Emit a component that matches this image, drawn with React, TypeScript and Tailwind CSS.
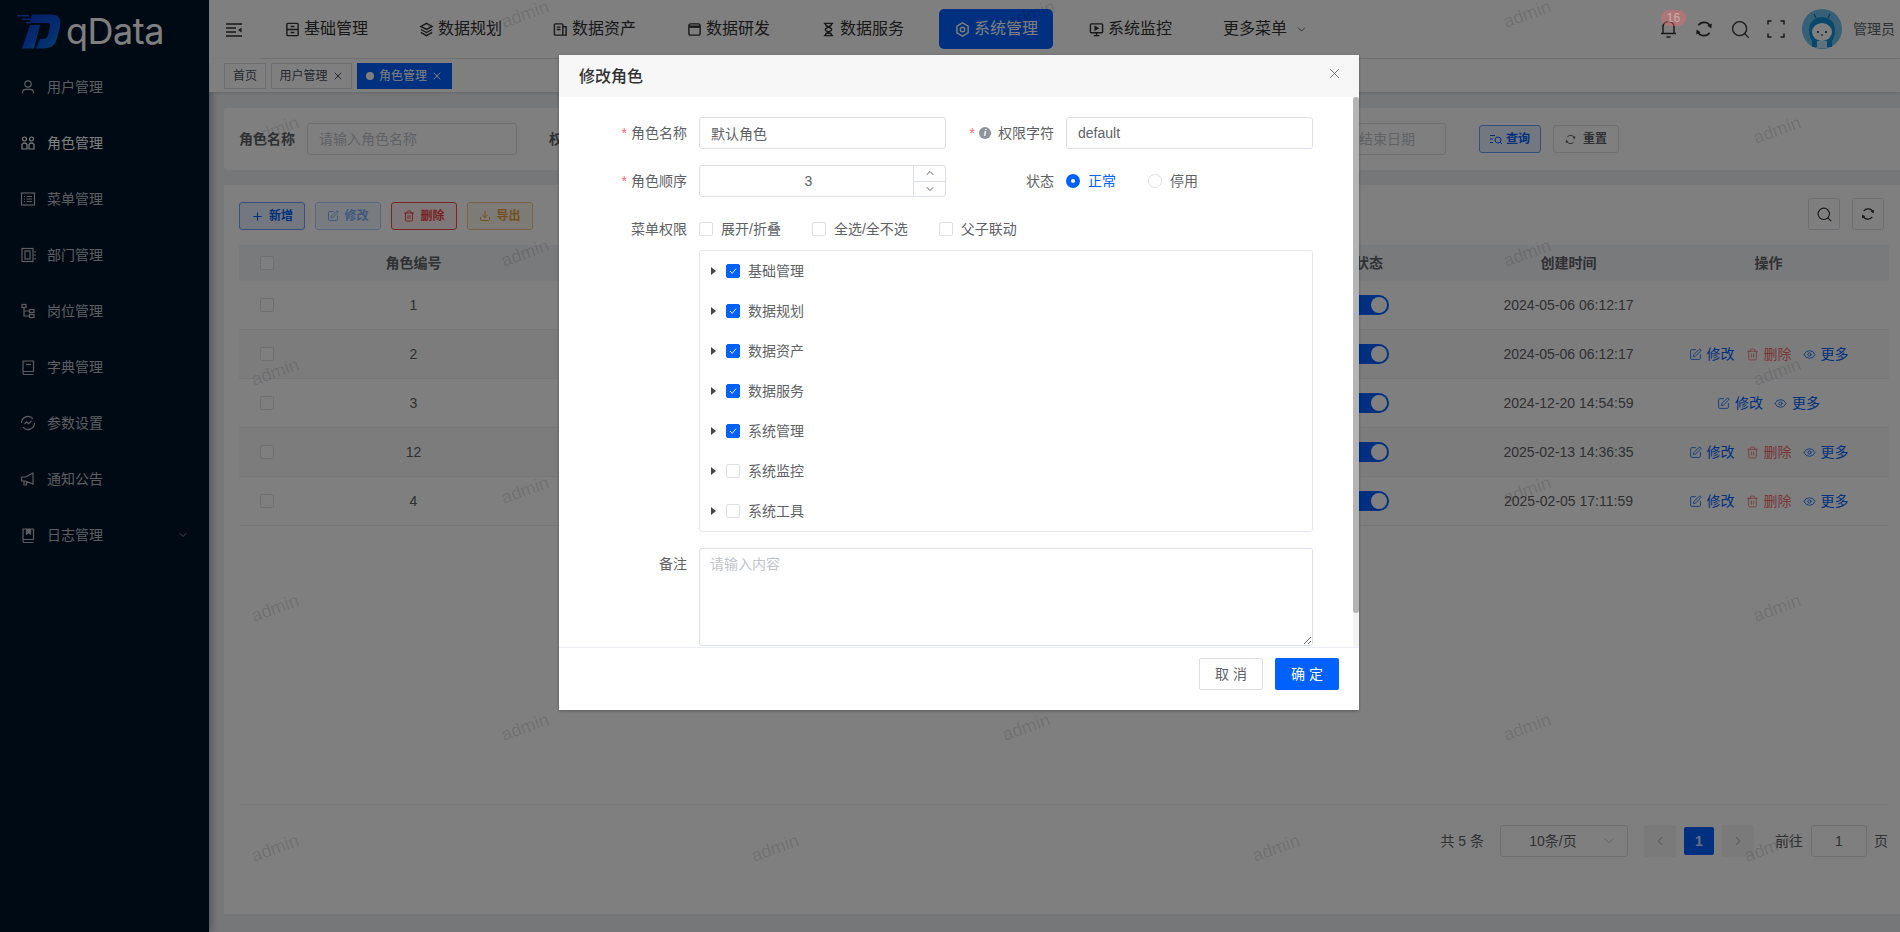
import { ChevronDown, ChevronLeft, ChevronRight, ChevronUp, Download, Eye, Plus, Search, SquarePen, Trash2, X } from 'lucide-react';
import type { FC, ReactNode } from 'react';

const FONT = 'font-["Liberation_Sans","Noto_Sans_CJK_SC",sans-serif]';
const GRID = 'grid-cols-[56px_237px_717px_240px_159px_1fr]';

const Stroke: FC<{ size?: number; className?: string; children: ReactNode }> = ({ size = 16, className, children }) => (
  <svg width={size} height={size} viewBox="0 0 16 16" fill="none" stroke="currentColor" strokeWidth="1.2" className={className}>
    {children}
  </svg>
);

const Refresh: FC<{ size: number; className?: string }> = ({ size, className }) => (
  <svg width={size} height={size} viewBox="0 0 18 18" fill="none" stroke="currentColor" strokeWidth="1.6" className={className}>
    <path d="M3.4 5.2A7 7 0 0 1 15.4 6.4M14.6 12.8A7 7 0 0 1 2.6 11.6" />
    <path d="M16.8 3.4l-.4 5-4-2.6zM1.2 14.6l.4-5 4 2.6z" fill="currentColor" stroke="none" />
  </svg>
);

const sideItems: { label: string; icon: ReactNode; active?: boolean; more?: boolean }[] = [
  { label: '用户管理', icon: <Stroke><circle cx="8" cy="5" r="3.2" /><path d="M2.5 14.5v-1c0-2 1.6-3.2 3.2-3.2h4.6c1.6 0 3.2 1.2 3.2 3.2v1" /></Stroke> },
  { label: '角色管理', active: true, icon: <Stroke><circle cx="4.5" cy="4" r="2" /><circle cx="11.5" cy="4" r="2" /><path d="M2 14V9.5l1.2-1.3h2.6L7 9.5V14zM9 14V9.5l1.2-1.3h2.6L14 9.5V14z" /></Stroke> },
  { label: '菜单管理', icon: <Stroke><rect x="1.5" y="2" width="13" height="12" /><path d="M4 5.5h1M4 8h1M4 10.5h1M6.5 5.5H12M6.5 8H12M6.5 10.5H12" /></Stroke> },
  { label: '部门管理', icon: <Stroke><rect x="2" y="1.5" width="11" height="13" /><rect x="5" y="4" width="5" height="8" /><path d="M15 4v1.5M15 7.5V9M15 11v1.5" /></Stroke> },
  { label: '岗位管理', icon: <Stroke><rect x="2" y="1.5" width="4" height="3" /><rect x="9.5" y="6.5" width="4.5" height="3" /><rect x="9.5" y="11.5" width="4.5" height="3" /><path d="M4 4.5V13h5.5M4 8h5.5" /></Stroke> },
  { label: '字典管理', icon: <Stroke><path d="M3 12.5V2h10.5v10.5H4.5a1.5 1.5 0 0 0 0 3h9" /><path d="M6 5.5h5" /></Stroke> },
  { label: '参数设置', icon: <Stroke><path d="M14.5 8A6.5 6.5 0 0 1 3 12.2M1.5 8A6.5 6.5 0 0 1 13 3.8" /><path d="M4.5 9l2-2.2 2 1.8 3-2.6" /></Stroke> },
  { label: '通知公告', icon: <Stroke><path d="M1.5 6h4L13 2v11L5.5 10h-4zM4 10v4h2.5v-3.4" /></Stroke> },
  { label: '日志管理', more: true, icon: <Stroke><path d="M3 12.5V2h10.5v10.5H4.5a1.5 1.5 0 0 0 0 3h9" /><path d="M6.5 2v5l2-1.4L10.5 7V2" fill="currentColor" /></Stroke> },
];

const navItems: { label: string; icon: ReactNode; active?: boolean }[] = [
  { label: '基础管理', icon: <Stroke size={15} className="stroke-[1.5]"><rect x="2" y="1.5" width="12" height="13" rx="1" /><path d="M2 8h12M6 4.8h4M6 11.2h4" /></Stroke> },
  { label: '数据规划', icon: <Stroke size={15} className="stroke-[1.5]"><path d="M8 1.5l6 3.2-6 3.2-6-3.2zM2 8l6 3.2L14 8M2 11l6 3.5 6-3.5" /></Stroke> },
  { label: '数据资产', icon: <Stroke size={15} className="stroke-[1.5]"><rect x="1.5" y="2" width="9" height="12" rx="1" /><path d="M4 5.5h4M4 8h4M10.5 5H14v9h-3.5" /></Stroke> },
  { label: '数据研发', icon: <Stroke size={15} className="stroke-[1.5]"><rect x="2" y="2" width="12" height="12" rx="2" /><path d="M2 5h12" strokeWidth="2.6" /></Stroke> },
  { label: '数据服务', icon: <Stroke size={15} className="stroke-[1.5]"><path d="M3 1.5h10M3 14.5h10M4.5 1.5c0 4 7 4 7 6.5s-7 2.5-7 6.5M11.5 1.5c0 4-7 4-7 6.5s7 2.5 7 6.5" /></Stroke> },
  { label: '系统管理', active: true, icon: <Stroke size={15} className="stroke-[1.5]"><path d="M8 1l6 3.5v7L8 15l-6-3.5v-7z" /><circle cx="8" cy="8" r="2.4" /></Stroke> },
  { label: '系统监控', icon: <Stroke size={15} className="stroke-[1.5]"><rect x="1.5" y="2" width="13" height="9.5" rx="1" /><path d="M8 11.5v3M5 14.5h6" /><path d="M6.5 5l3 1.7-3 1.7z" fill="currentColor" /></Stroke> },
];

const rows = [
  { id: '1', time: '2024-05-06 06:12:17', edit: false, del: false, more: false },
  { id: '2', time: '2024-05-06 06:12:17', edit: true, del: true, more: true },
  { id: '3', time: '2024-12-20 14:54:59', edit: true, del: false, more: true },
  { id: '12', time: '2025-02-13 14:36:35', edit: true, del: true, more: true },
  { id: '4', time: '2025-02-05 17:11:59', edit: true, del: true, more: true },
];

const watermarks = [
  [525, 14], [1031, 14], [1527, 14],
  [275, 130], [775, 130], [1276, 130], [1777, 130],
  [525, 253], [1031, 253], [1527, 253],
  [275, 372], [775, 372], [1276, 372], [1777, 372],
  [525, 490], [1031, 490], [1527, 490],
  [275, 608], [775, 608], [1276, 608], [1777, 608],
  [525, 727], [1026, 727], [1527, 727],
  [275, 848], [775, 848], [1276, 848], [1768, 848],
];

const treeItems = [
  { label: '基础管理', on: true },
  { label: '数据规划', on: true },
  { label: '数据资产', on: true },
  { label: '数据服务', on: true },
  { label: '系统管理', on: true },
  { label: '系统监控', on: false },
  { label: '系统工具', on: false },
];

const Logo: FC = () => (
  <svg width="46" height="35" viewBox="0 0 46 35" className="shrink-0">
    <defs>
      <linearGradient id="logoD" x1="0" y1="0" x2="1" y2="1">
        <stop offset="0" stopColor="#0a3fd0" />
        <stop offset="0.6" stopColor="#0a55e0" />
        <stop offset="1" stopColor="#0c8fe0" />
      </linearGradient>
    </defs>
    <path d="M1 1h12v1.5H1zM6 4.5h9V6H6zM10 8h5v1.5h-5z" fill="#0a4fe0" />
    <path d="M16 .5h19Q46 .5 44 12l-3 12Q39 34.5 27 34.5h-7L24 25h3q4 0 5-4l2-8q1-4-3-4H14z" fill="url(#logoD)" />
    <path d="M14 11h10l-6 23.5H6z" fill="url(#logoD)" />
  </svg>
);

const Avatar: FC = () => (
  <svg width="40" height="40" viewBox="0 0 40 40" className="shrink-0">
    <circle cx="20" cy="20" r="20" fill="#6ec0ee" />
    <path d="M10 38v-6c-2-3-3-7-3-11 0-8 6-13 13-13s13 5 13 13c0 4-1 8-3 11v6z" fill="#1090d8" />
    <path d="M14 9l-2-4M26 9l2-4" stroke="#0c6ea8" strokeWidth="1.2" />
    <ellipse cx="20" cy="23" rx="10" ry="9" fill="#fff" />
    <circle cx="16" cy="23" r="1" fill="#222" />
    <circle cx="24" cy="23" r="1" fill="#222" />
    <path d="M19 26h2" stroke="#222" />
    <rect x="15" y="32" width="10" height="7" fill="#bfe3f5" />
  </svg>
);

const Box: FC<{ on?: boolean }> = ({ on }) => (
  <span className={`flex h-[14px] w-[14px] shrink-0 items-center justify-center rounded-[2px] border ${on ? 'border-[#0061ff] bg-[#0061ff]' : 'border-[#dcdfe6] bg-white'}`}>
    {on && (
      <svg width="10" height="10" viewBox="0 0 10 10" fill="none" stroke="#fff" strokeWidth="0.9">
        <path d="M2 5l2.2 2.4L8 2.6" />
      </svg>
    )}
  </span>
);

const Label: FC<{ required?: boolean; children: ReactNode; className?: string }> = ({ required, children, className }) => (
  <div className={`flex shrink-0 items-center justify-end text-sm text-[#606266] ${className ?? ''}`}>
    {required && <span className="mr-1 text-[#f56c6c]">*</span>}
    {children}
  </div>
);

const ToolButton: FC<{ icon: ReactNode; label: string; className: string }> = ({ icon, label, className }) => (
  <button className={`flex h-7 w-[66px] items-center justify-center gap-[5px] rounded-[3px] border text-xs font-bold ${className}`}>
    {icon}
    {label}
  </button>
);

export default function App() {
  return (
    <div className={`relative flex h-[932px] w-[1900px] overflow-hidden bg-[#edeff3] ${FONT}`}>
      <aside className="flex h-full w-[209px] shrink-0 flex-col bg-[#001529] shadow-[2px_0_8px_rgba(0,21,41,0.35)]">
        <div className="flex h-[59px] items-start pl-4 pt-[14px]">
          <Logo />
          <span className="mt-[-1px] ml-1 font-['Inter'] text-[36px] leading-9 tracking-[-0.5px] text-white">qData</span>
        </div>
        <nav className="flex flex-col">
          {sideItems.map((item) => (
            <div key={item.label} className={`flex h-14 items-center pr-5 pl-5 text-sm ${item.active ? 'text-white' : 'text-[#b9bcc2]'}`}>
              {item.icon}
              <span className="ml-[11px]">{item.label}</span>
              {item.more && <ChevronDown size={12} strokeWidth={1.5} className="ml-auto" />}
            </div>
          ))}
        </nav>
      </aside>

      <main className="flex min-w-0 flex-1 flex-col">
        <header className="flex h-[59px] shrink-0 bg-white">
          <div className="flex w-[50px] shrink-0 items-center pl-[17px]">
            <svg width="16" height="14" viewBox="0 0 16 14" fill="none" stroke="#303133" strokeWidth="1.4">
              <path d="M0 1h16M0 5h10M0 9h10M0 13h16" />
              <path d="M15.5 4.5v5L12 7z" fill="#303133" stroke="none" />
            </svg>
          </div>
          <div className="flex flex-1 items-center border-b border-[#e6e6e6] pl-[10px] text-[#303133]">
            <div className="flex items-center gap-5">
              {navItems.map((item) => (
                <div key={item.label} className={`flex h-10 w-[114px] items-center gap-1 rounded-[5px] pl-4 text-base ${item.active ? 'bg-[#0061ff] text-white' : ''}`}>
                  {item.icon}
                  {item.label}
                </div>
              ))}
              <div className="flex h-10 items-center gap-2 pl-4 text-base">
                更多菜单
                <ChevronDown size={13} strokeWidth={1.4} />
              </div>
            </div>
            <div className="ml-auto flex items-center">
              <div className="relative flex h-9 w-9 items-center justify-center">
                <svg width="17" height="18" viewBox="0 0 17 18" fill="none" stroke="#303133" strokeWidth="1.4">
                  <path d="M1 13.5h15M3 13.5V7a5.5 5.5 0 0 1 11 0v6.5M6.5 17h4" />
                </svg>
                <span className="absolute top-[-1px] left-[11px] z-10 flex h-4 w-[25px] items-center justify-center rounded-full bg-[#f56c6c]/40 text-xs text-white/40">16</span>
              </div>
              <span className="flex h-9 w-9 items-center justify-center text-[#303133]"><Refresh size={18} /></span>
              <span className="flex h-9 w-9 items-center justify-center text-[#303133]"><Search size={21} strokeWidth={1.5} /></span>
              <span className="mr-2 flex h-9 w-9 items-center justify-center">
                <svg width="18" height="18" viewBox="0 0 18 18" fill="none" stroke="#303133" strokeWidth="1.5">
                  <path d="M1 4.5V1h3.5M13.5 1H17v3.5M17 13.5V17h-3.5M4.5 17H1v-3.5" />
                </svg>
              </span>
              <Avatar />
              <span className="mr-[5px] ml-[11px] text-sm text-[#606266]">管理员</span>
            </div>
          </div>
        </header>

        <div className="flex h-[33px] shrink-0 items-center gap-[5px] bg-white pl-[15px] text-xs text-[#495060] shadow-[0_1px_3px_rgba(0,0,0,0.14)]">
          <span className="flex h-[26px] w-[42px] items-center justify-center border border-[#d8dce5]">首页</span>
          <span className="flex h-[26px] w-[81px] items-center justify-center gap-1 border border-[#d8dce5]">
            用户管理
            <X size={12} />
          </span>
          <span className="flex h-[26px] w-[95px] items-center justify-center gap-1 bg-[#0061ff] text-white">
            <span className="mr-[1px] h-2 w-2 rounded-full bg-white" />
            角色管理
            <X size={12} />
          </span>
        </div>

        <div className="flex min-h-0 flex-1 flex-col gap-[15px] pt-4 pb-[18px] pl-[15px]">
          <section className="flex h-[62px] shrink-0 items-center rounded-l-[3px] bg-white pl-[15px] text-sm">
            <span className="w-[68px] shrink-0 font-bold text-[#606266]">角色名称</span>
            <span className="flex h-8 w-[210px] shrink-0 items-center rounded-[3px] border border-[#dcdfe6] pl-[11px] text-[#c0c4cc]">请输入角色名称</span>
            <span className="ml-8 w-[697px] shrink-0 font-bold text-[#606266]">权限字符</span>
            <span className="flex h-8 w-[200px] shrink-0 items-center justify-end rounded-[3px] border border-[#dcdfe6] pr-[30px] text-[#c0c4cc]">结束日期</span>
            <button className="ml-[33px] flex h-7 w-[62px] items-center justify-center gap-[3px] rounded-[3px] border border-[#6c9cff] bg-[#e6efff] text-xs font-bold text-[#0061ff]">
              <svg width="13" height="13" viewBox="0 0 13 13" fill="none" stroke="currentColor">
                <path d="M0 2.5h5M0 6h3M0 9.5h3" />
                <circle cx="8" cy="7" r="3" />
                <path d="M10.2 9.2L12 11" />
              </svg>
              查询
            </button>
            <button className="ml-3 flex h-7 w-[66px] items-center justify-center gap-[7px] rounded-[3px] border border-[#dcdfe6] text-xs font-bold text-[#606266]">
              <Refresh size={11} />
              重置
            </button>
          </section>

          <section className="flex min-h-0 flex-1 flex-col bg-white pt-[13px] pr-[11px] pb-[57px] pl-[15px]">
            <div className="flex h-8 shrink-0 items-end justify-between pr-[5px]">
              <div className="flex gap-[10px]">
                <ToolButton icon={<Plus size={13} />} label="新增" className="border-[#6c9cff] bg-[#e6efff] text-[#0061ff]" />
                <ToolButton icon={<SquarePen size={12} />} label="修改" className="border-[#b3d0ff] bg-[#f0f6ff] text-[#80b0ff]" />
                <ToolButton icon={<Trash2 size={12} />} label="删除" className="border-[#f04848] bg-[#fef0f0] text-[#f04848]" />
                <ToolButton icon={<Download size={12} />} label="导出" className="border-[#f5c98a] bg-[#fdf6ec] text-[#e6a23c]" />
              </div>
              <div className="flex gap-3 text-[#303133]">
                <span className="flex h-8 w-8 items-center justify-center rounded-[3px] border border-[#dcdfe6]"><Search size={17} strokeWidth={1.6} /></span>
                <span className="flex h-8 w-8 items-center justify-center rounded-[3px] border border-[#dcdfe6]"><Refresh size={14} /></span>
              </div>
            </div>

            <div className={`mt-[15px] grid h-9 shrink-0 ${GRID} items-center bg-[#f3f4f8] text-center text-sm font-bold text-[#606266]`}>
              <span className="flex justify-center"><Box /></span>
              <span>角色编号</span>
              <span />
              <span>状态</span>
              <span>创建时间</span>
              <span>操作</span>
            </div>
            {rows.map((row, i) => (
              <div key={row.id} className={`grid h-[49px] shrink-0 ${GRID} items-center border-b border-[#ebeef5] text-center text-sm text-[#606266] ${i % 2 === 1 ? 'bg-[#f9f9fb]' : ''}`}>
                <span className="flex justify-center"><Box /></span>
                <span>{row.id}</span>
                <span />
                <span className="flex justify-center">
                  <span className="flex h-5 w-10 items-center justify-end rounded-full bg-[#0061ff] pr-[2px]">
                    <span className="h-4 w-4 rounded-full bg-white" />
                  </span>
                </span>
                <span>{row.time}</span>
                <span className="flex items-center justify-center gap-[11px] text-[#0061ff]">
                  {row.edit && <span className="flex items-center gap-[5px]"><SquarePen size={13} strokeWidth={1.5} />修改</span>}
                  {row.del && <span className="flex items-center gap-[5px] text-[#f56c6c]"><Trash2 size={13} strokeWidth={1.5} />删除</span>}
                  {row.more && <span className="flex items-center gap-[5px]"><Eye size={13} strokeWidth={1.5} />更多</span>}
                </span>
              </div>
            ))}

            <div className="mt-auto flex h-[53px] shrink-0 items-end justify-end border-t border-[#ebeef5] text-sm text-[#606266]">
              <span className="mr-4 flex h-8 items-center whitespace-nowrap">共 5 条</span>
              <span className="relative flex h-8 w-32 items-center justify-center rounded-[3px] border border-[#dcdfe6] pr-[22px]">
                10条/页
                <ChevronDown size={16} strokeWidth={1.3} className="absolute right-[10px] text-[#c0c4cc]" />
              </span>
              <span className="ml-4 flex h-8 w-8 items-center justify-center rounded-[2px] bg-[#f4f4f5] text-[#c0c4cc]"><ChevronLeft size={14} /></span>
              <span className="mx-2 mb-[2px] flex h-7 w-[30px] items-center justify-center rounded-[2px] bg-[#0061ff] font-bold text-white/80">1</span>
              <span className="flex h-8 w-8 items-center justify-center rounded-[2px] bg-[#f4f4f5] text-[#c0c4cc]"><ChevronRight size={14} /></span>
              <span className="ml-[21px] flex h-8 items-center">前往</span>
              <span className="ml-2 flex h-8 w-14 items-center justify-center rounded-[3px] border border-[#dcdfe6]">1</span>
              <span className="ml-[7px] flex h-8 items-center pr-[1px]">页</span>
            </div>
          </section>
        </div>
      </main>

      {watermarks.map(([x, y]) => (
        <span
          key={`${x}-${y}`}
          className="pointer-events-none absolute -translate-x-1/2 -translate-y-1/2 -rotate-[20deg] text-lg text-black/[0.13]"
          style={{ left: x, top: y }}
        >
          admin
        </span>
      ))}

      <div className="absolute inset-0 bg-black/50" />

      <div className="absolute top-[55px] left-[559px] z-20 flex h-[655px] w-[800px] flex-col bg-white shadow-[0_1px_3px_rgba(0,0,0,0.3)]">
        <div className="flex h-[42px] shrink-0 items-center justify-between bg-[#f7f7f7] pr-4 pl-5">
          <span className="mt-[1px] text-base font-medium text-[#303133]">修改角色</span>
          <X size={17} strokeWidth={1.2} className="mt-[-5px] text-[#606266]" />
        </div>

        <div className="relative min-h-0 flex-1 overflow-hidden pt-5 pr-[46px] text-sm text-[#606266]">
          <div className="absolute top-0 right-0 bottom-0 w-[6px] bg-[#f3f3f3]">
            <div className="h-[516px] rounded-[3px] bg-[#b4b4b4]" />
          </div>

          <div className="flex h-8 items-center">
            <Label required className="w-[128px]">角色名称</Label>
            <input readOnly defaultValue="默认角色" className="ml-3 h-8 w-[247px] rounded-[3px] border border-[#dcdfe6] pl-[11px] outline-none" />
            <Label required className="w-[108px]">
              <span className="mr-[7px] flex h-3 w-3 items-center justify-center rounded-full bg-[#909399] text-[9px] font-bold text-white italic">i</span>
              权限字符
            </Label>
            <input readOnly defaultValue="default" className="ml-3 h-8 w-[247px] rounded-[3px] border border-[#dcdfe6] pl-[11px] outline-none" />
          </div>

          <div className="mt-4 flex h-8 items-center">
            <Label required className="w-[128px]">角色顺序</Label>
            <div className="ml-3 flex h-8 w-[247px] rounded-[3px] border border-[#dcdfe6]">
              <span className="flex flex-1 items-center justify-center pl-1">3</span>
              <span className="flex w-8 flex-col border-l border-[#dcdfe6] text-[#606266]">
                <span className="flex flex-1 items-center justify-center border-b border-[#dcdfe6]"><ChevronUp size={12} /></span>
                <span className="flex flex-1 items-center justify-center"><ChevronDown size={12} /></span>
              </span>
            </div>
            <Label className="w-[108px]">状态</Label>
            <span className="ml-3 flex h-[14px] w-[14px] items-center justify-center rounded-full bg-[#0061ff]">
              <span className="h-1 w-1 rounded-full bg-white" />
            </span>
            <span className="ml-2 text-[#0061ff]">正常</span>
            <span className="ml-8 h-[14px] w-[14px] rounded-full border border-[#dcdfe6]" />
            <span className="ml-2">停用</span>
          </div>

          <div className="mt-4 flex h-8 items-center">
            <Label className="w-[128px]">菜单权限</Label>
            <span className="ml-3"><Box /></span>
            <span className="ml-2">展开/折叠</span>
            <span className="ml-[31px]"><Box /></span>
            <span className="ml-2">全选/全不选</span>
            <span className="ml-[31px]"><Box /></span>
            <span className="ml-2">父子联动</span>
          </div>

          <div className="mt-[5px] ml-[140px] w-[614px] rounded-[3px] border border-[#e5e7ed]">
            {treeItems.map((item) => (
              <div key={item.label} className="flex h-10 items-center pl-[11px]">
                <svg width="5" height="8" viewBox="0 0 5 8" fill="#444">
                  <path d="M0 0l5 4-5 4z" />
                </svg>
                <span className="ml-[10px]"><Box on={item.on} /></span>
                <span className="ml-2">{item.label}</span>
              </div>
            ))}
          </div>

          <div className="mt-4 flex">
            <Label className="h-8 w-[128px]">备注</Label>
            <textarea
              readOnly
              placeholder="请输入内容"
              className="ml-3 block h-[98px] w-[614px] resize-y rounded-[3px] border border-[#dcdfe6] px-[10px] py-[5px] outline-none placeholder:text-[#c0c4cc]"
            />
          </div>
        </div>

        <div className="flex h-[63px] shrink-0 items-center justify-end gap-3 border-t border-[#ebeef5] pr-5 pb-[10px]">
          <button className="h-8 w-16 rounded-[2px] border border-[#dcdfe6] text-sm text-[#606266]">取 消</button>
          <button className="h-8 w-16 rounded-[2px] bg-[#0061ff] text-sm text-white">确 定</button>
        </div>
      </div>
    </div>
  );
}
